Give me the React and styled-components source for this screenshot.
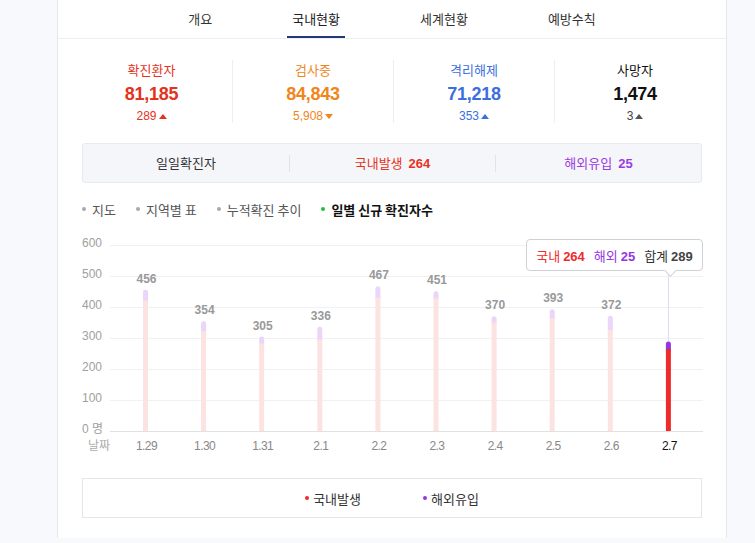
import React from 'react'
import styled, { createGlobalStyle } from 'styled-components'

const KR = `"Noto Sans CJK KR", "Liberation Sans", sans-serif`
const NUM = `"Liberation Sans", "Noto Sans CJK KR", sans-serif`

const RED = '#ee2b2b'
const PURPLE = '#9436e3'

const GlobalStyle = createGlobalStyle`
    html, body {
        margin: 0;
        padding: 0;
        background: #f8f9fc;
    }
    body {
        font-family: ${KR};
        color: #222;
    }
`

const Page = styled.div`
    width: 755px;
    height: 543px;
    overflow: hidden;
`

const Card = styled.div`
    margin-left: 57px;
    width: 670px;
    height: 538px;
    background: #fff;
    border-left: 1px solid #e6e7ec;
    border-right: 1px solid #e6e7ec;
    box-sizing: border-box;
`

const Tabs = styled.div`
    display: flex;
    justify-content: center;
    gap: 70px;
    height: 38px;
    border-bottom: 1px solid #eceef2;
`

const Tab = styled.div`
    padding: 0 5px;
    font-size: 13px;
    line-height: 38px;
    color: ${props => (props.active ? '#222' : '#333')};
    box-shadow: ${props => (props.active ? 'inset 0 -2px 0 #1f3b73' : 'none')};
`

const Body = styled.div`
    padding: 0 24px;
`

const Stats = styled.div`
    display: grid;
    grid-template-columns: repeat(4, 1fr);
    margin: 21px -13px 0 -11px;
`

const Stat = styled.div`
    display: flex;
    flex-direction: column;
    align-items: center;
    height: 63px;
    border-left: ${props => (props.first ? 'none' : '1px solid #eceef2')};
    color: ${props => props.color};
`

const StatLabel = styled.div`
    font-size: 13px;
    line-height: 18px;
    margin-top: 1px;
`

const StatNumber = styled.div`
    font-family: ${NUM};
    font-weight: bold;
    font-size: 18px;
    letter-spacing: -0.3px;
    line-height: 22px;
    margin-top: 4px;
`

const StatDiff = styled.div`
    font-family: ${NUM};
    font-size: 12px;
    line-height: 16px;
    margin-top: 3px;
    color: ${props => props.color};
    display: flex;
    align-items: center;
    gap: 2px;
`

const Tri = styled.span`
    width: 0;
    height: 0;
    border-left: 4px solid transparent;
    border-right: 4px solid transparent;
    ${props =>
        props.down
            ? `border-top: 5px solid ${props.color};`
            : `border-bottom: 5px solid ${props.color};`}
`

const Daily = styled.div`
    margin-top: 20px;
    height: 40px;
    display: grid;
    grid-template-columns: repeat(3, 1fr);
    align-items: center;
    background: #f5f6fa;
    border: 1px solid #e8eaef;
    border-radius: 3px;
    box-sizing: border-box;
`

const DailyCell = styled.div`
    text-align: center;
    font-size: 13px;
    color: ${props => props.color};
    border-left: ${props => (props.first ? 'none' : '1px solid #e1e3e8')};
    line-height: 16px;

    b {
        font-family: ${NUM};
        font-weight: bold;
        margin-left: 6px;
    }
`

const ChartTabs = styled.div`
    display: flex;
    gap: 20px;
    margin-top: 16px;
    height: 20px;
    align-items: center;
`

const ChartTab = styled.div`
    display: flex;
    align-items: center;
    gap: 6px;
    font-size: 13px;
    color: ${props => (props.active ? '#111' : '#555')};
    font-weight: ${props => (props.active ? 'bold' : 'normal')};

    &::before {
        content: '';
        width: 4px;
        height: 4px;
        border-radius: 50%;
        background: ${props => (props.active ? '#1cc23a' : '#aaa')};
    }
`

const ChartWrap = styled.div`
    position: relative;
    margin-top: 17px;
    height: 222px;
`

const Tooltip = styled.div`
    position: absolute;
    left: 444px;
    top: 3px;
    width: 177px;
    height: 32px;
    box-sizing: border-box;
    background: #fff;
    border: 1px solid #cfd1d6;
    border-radius: 4px;
    display: flex;
    align-items: center;
    justify-content: center;
    gap: 9px;
    font-size: 13px;

    &::after {
        content: '';
        position: absolute;
        left: 139px;
        bottom: -5px;
        width: 8px;
        height: 8px;
        background: #fff;
        border-right: 1px solid #cfd1d6;
        border-bottom: 1px solid #cfd1d6;
        transform: rotate(45deg);
    }
`

const TipItem = styled.span`
    color: ${props => props.color};

    b {
        font-family: ${NUM};
        font-weight: bold;
        color: ${props => props.numColor || props.color};
    }
`

const Legend = styled.div`
    margin-top: 20px;
    height: 40px;
    border: 1px solid #e5e6ea;
    box-sizing: border-box;
    display: flex;
    justify-content: center;
    align-items: center;
    gap: 62px;
`

const LegendItem = styled.div`
    display: flex;
    align-items: center;
    gap: 4px;
    font-size: 13px;
    color: #333;

    &::before {
        content: '';
        width: 4px;
        height: 4px;
        border-radius: 50%;
        background: ${props => props.color};
    }
`

const days = [
    { d: '1.29', total: 456, ov: 35 },
    { d: '1.30', total: 354, ov: 32 },
    { d: '1.31', total: 305, ov: 23 },
    { d: '2.1', total: 336, ov: 41 },
    { d: '2.2', total: 467, ov: 36 },
    { d: '2.3', total: 451, ov: 23 },
    { d: '2.4', total: 370, ov: 20 },
    { d: '2.5', total: 393, ov: 29 },
    { d: '2.6', total: 372, ov: 46 },
    { d: '2.7', total: 289, ov: 25 },
]

const BASE = 195
const SCALE = 0.31

function Chart() {
    // chart coordinates are relative to the plot wrapper (page x 82, y 236)
    const ticks = [600, 500, 400, 300, 200, 100, 0]
    const xOf = i => 63.5 + i * 58.1
    const last = days.length - 1

    return (
        <svg width="622" height="222" style={{ display: 'block' }}>
            {ticks.map(t => (
                <g key={t}>
                    <line
                        x1="28"
                        x2="621"
                        y1={BASE - t * SCALE + 0.5}
                        y2={BASE - t * SCALE + 0.5}
                        stroke={t === 0 ? '#e0e1e5' : '#f0f1f5'}
                    />
                    <text
                        x="0"
                        y={BASE - t * SCALE - 1}
                        fontSize="12"
                        fill="#a0a0a0"
                        fontFamily={NUM}
                        dominantBaseline="middle"
                    >
                        {t === 0 ? '0 명' : t}
                    </text>
                </g>
            ))}
            <line
                x1={xOf(last)}
                x2={xOf(last)}
                y1="35"
                y2={BASE - days[last].total * SCALE}
                stroke="#dcdcef"
            />
            {days.map((day, i) => {
                const x = xOf(i)
                const active = i === last
                const top = BASE - day.total * SCALE
                const split = BASE - (day.total - day.ov) * SCALE
                return (
                    <g key={day.d}>
                        <rect
                            x={x - 2.5}
                            y={top}
                            width="5"
                            height={split - top + 3}
                            rx="2.5"
                            fill={active ? PURPLE : '#e9d6f8'}
                        />
                        <rect
                            x={x - 2.5}
                            y={split}
                            width="5"
                            height={BASE - split}
                            fill={active ? RED : '#fde2e2'}
                        />
                        {!active && (
                            <text
                                x={x + 1}
                                y={top - 10}
                                fontSize="12"
                                fontWeight="bold"
                                fill="#999"
                                fontFamily={NUM}
                                textAnchor="middle"
                                dominantBaseline="middle"
                            >
                                {day.total}
                            </text>
                        )}
                        <text
                            x={x + 1}
                            y="211"
                            fontSize="12"
                            fill={active ? '#111' : '#888'}
                            fontFamily={NUM}
                            textAnchor="middle"
                            dominantBaseline="middle"
                            letterSpacing="-0.6"
                        >
                            {day.d}
                        </text>
                    </g>
                )
            })}
            <text
                x="6"
                y="211"
                fontSize="12"
                fill="#aaa"
                fontFamily={KR}
                dominantBaseline="middle"
            >
                날짜
            </text>
        </svg>
    )
}

const stats = [
    { label: '확진환자', num: '81,185', diff: '289', color: '#e4321b', down: false },
    { label: '검사중', num: '84,843', diff: '5,908', color: '#f0861b', down: true },
    { label: '격리해제', num: '71,218', diff: '353', color: '#3b6fe0', down: false },
    { label: '사망자', num: '1,474', diff: '3', color: '#111', diffColor: '#444', triColor: '#555', down: false },
]

export default function App() {
    return (
        <Page>
            <GlobalStyle />
            <Card>
                <Tabs>
                    <Tab>개요</Tab>
                    <Tab active>국내현황</Tab>
                    <Tab>세계현황</Tab>
                    <Tab>예방수칙</Tab>
                </Tabs>
                <Body>
                    <Stats>
                        {stats.map((s, i) => (
                            <Stat key={s.label} first={i === 0} color={s.color}>
                                <StatLabel>{s.label}</StatLabel>
                                <StatNumber>{s.num}</StatNumber>
                                <StatDiff color={s.diffColor || s.color}>
                                    {s.diff}
                                    <Tri down={s.down} color={s.triColor || s.color} />
                                </StatDiff>
                            </Stat>
                        ))}
                    </Stats>
                    <Daily>
                        <DailyCell first color="#333">
                            일일확진자
                        </DailyCell>
                        <DailyCell color="#e8321e">
                            국내발생<b>264</b>
                        </DailyCell>
                        <DailyCell color="#9b3be0">
                            해외유입<b>25</b>
                        </DailyCell>
                    </Daily>
                    <ChartTabs>
                        <ChartTab>지도</ChartTab>
                        <ChartTab>지역별 표</ChartTab>
                        <ChartTab>누적확진 추이</ChartTab>
                        <ChartTab active>일별 신규 확진자수</ChartTab>
                    </ChartTabs>
                    <ChartWrap>
                        <Chart />
                        <Tooltip>
                            <TipItem color={RED}>
                                국내 <b>264</b>
                            </TipItem>
                            <TipItem color={PURPLE}>
                                해외 <b>25</b>
                            </TipItem>
                            <TipItem color="#333" numColor="#444">
                                합계 <b>289</b>
                            </TipItem>
                        </Tooltip>
                    </ChartWrap>
                    <Legend>
                        <LegendItem color={RED}>국내발생</LegendItem>
                        <LegendItem color={PURPLE}>해외유입</LegendItem>
                    </Legend>
                </Body>
            </Card>
        </Page>
    )
}
